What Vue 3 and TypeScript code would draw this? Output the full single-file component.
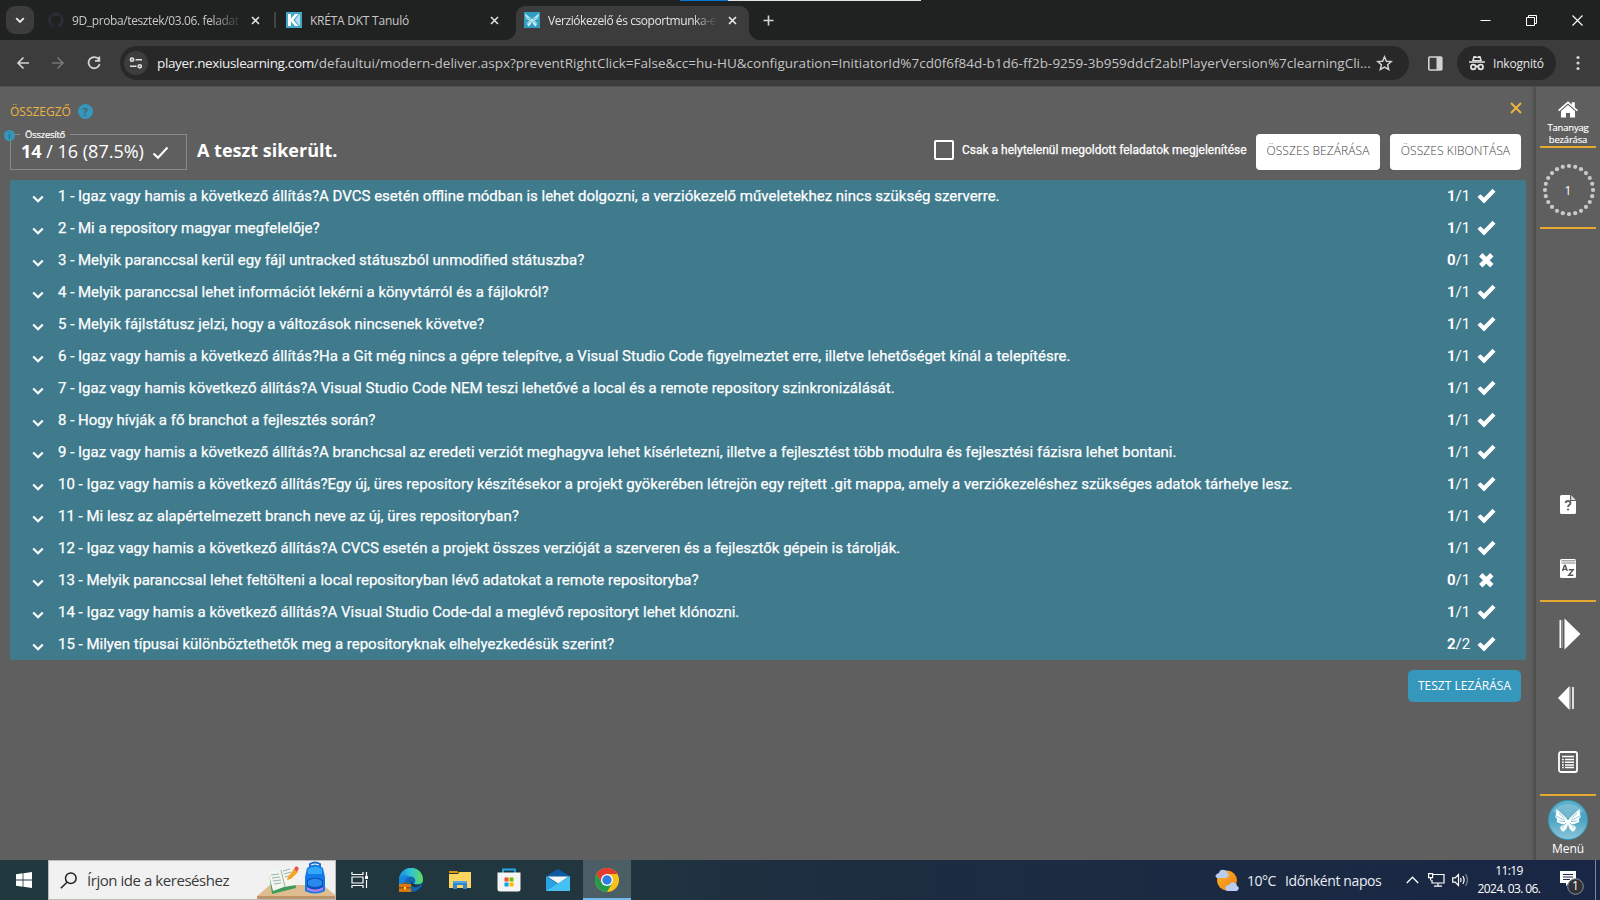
<script setup lang="ts">
interface Question {
  text: string
  score: number
  max: number
}

const questions: Question[] = [
  { text: 'Igaz vagy hamis a következő állítás?A DVCS esetén offline módban is lehet dolgozni, a verziókezelő műveletekhez nincs szükség szerverre.', score: 1, max: 1 },
  { text: 'Mi a repository magyar megfelelője?', score: 1, max: 1 },
  { text: 'Melyik paranccsal kerül egy fájl untracked státuszból unmodified státuszba?', score: 0, max: 1 },
  { text: 'Melyik paranccsal lehet információt lekérni a könyvtárról és a fájlokról?', score: 1, max: 1 },
  { text: 'Melyik fájlstátusz jelzi, hogy a változások nincsenek követve?', score: 1, max: 1 },
  { text: 'Igaz vagy hamis a következő állítás?Ha a Git még nincs a gépre telepítve, a Visual Studio Code figyelmeztet erre, illetve lehetőséget kínál a telepítésre.', score: 1, max: 1 },
  { text: 'Igaz vagy hamis következő állítás?A Visual Studio Code NEM teszi lehetővé a local és a remote repository szinkronizálását.', score: 1, max: 1 },
  { text: 'Hogy hívják a fő branchot a fejlesztés során?', score: 1, max: 1 },
  { text: 'Igaz vagy hamis a következő állítás?A branchcsal az eredeti verziót meghagyva lehet kísérletezni, illetve a fejlesztést több modulra és fejlesztési fázisra lehet bontani.', score: 1, max: 1 },
  { text: 'Igaz vagy hamis a következő állítás?Egy új, üres repository készítésekor a projekt gyökerében létrejön egy rejtett .git mappa, amely a verziókezeléshez szükséges adatok tárhelye lesz.', score: 1, max: 1 },
  { text: 'Mi lesz az alapértelmezett branch neve az új, üres repositoryban?', score: 1, max: 1 },
  { text: 'Igaz vagy hamis a következő állítás?A CVCS esetén a projekt összes verzióját a szerveren és a fejlesztők gépein is tárolják.', score: 1, max: 1 },
  { text: 'Melyik paranccsal lehet feltölteni a local repositoryban lévő adatokat a remote repositoryba?', score: 0, max: 1 },
  { text: 'Igaz vagy hamis a következő állítás?A Visual Studio Code-dal a meglévő repositoryt lehet klónozni.', score: 1, max: 1 },
  { text: 'Milyen típusai különböztethetők meg a repositoryknak elhelyezkedésük szerint?', score: 2, max: 2 },
]

const dots = Array.from({ length: 24 }, (_, i) => {
  const a = (i * Math.PI) / 12
  return { x: 26 + 24 * Math.cos(a), y: 26 + 24 * Math.sin(a) }
})
</script>

<template>
  <div class="screen">
    <header class="tabs">
      <div class="progress"><i></i></div>
      <div class="chev-btn">
        <svg width="10" height="7" viewBox="0 0 10 7"><path d="M1.2 1.2 5 5l3.800-3.800" fill="none" stroke="#e8e8e8" stroke-width="1.900" /></svg>
      </div>
      <div class="tab t1">
        <svg width="16" height="16" viewBox="0 0 16 16"><path fill="#292e37" d="M8 .3a8 8 0 0 0-2.500 15.500c.4.100.500-.2.500-.4v-1.500c-2.200.5-2.700-.9-2.700-.9-.4-.9-.9-1.200-.9-1.200-.7-.5.1-.5.1-.5.800.1 1.200.8 1.200.8.700 1.300 1.900.9 2.300.7.1-.5.300-.9.500-1.100-1.800-.2-3.600-.9-3.600-4 0-.9.300-1.600.8-2.100-.1-.2-.4-1 .1-2.100 0 0 .7-.2 2.200.8a7.500 7.500 0 0 1 4 0c1.500-1 2.200-.8 2.200-.8.400 1.100.2 1.900.1 2.100.5.600.8 1.300.8 2.100 0 3.100-1.900 3.700-3.700 3.900.3.300.6.800.6 1.500v2.300c0 .2.100.5.500.4A8 8 0 0 0 8 .3z" /></svg>
        <span class="ttl">9D_proba/tesztek/03.06. feladat</span>
        <svg class="x" width="9" height="9" viewBox="0 0 9 9"><path d="m1 1 7 7M8 1 1 8" stroke="#dedede" stroke-width="1.600" /></svg>
      </div>
      <i class="sep"></i>
      <div class="tab t2">
        <svg width="16" height="16" viewBox="0 0 16 16"><path fill="#43a7c9" d="M0 0h16v16H0z" /><path fill="#fff" d="M2 2h3v4.500L9 2h3.500L7.300 8l5.200 6H9L5 9.500V14H2z" /><path fill="#b7e0ec" d="m12 4 2-2v12l-2-2-3-4z" /></svg>
        <span class="ttl">KRÉTA DKT Tanuló</span>
        <svg class="x" width="9" height="9" viewBox="0 0 9 9"><path d="m1 1 7 7M8 1 1 8" stroke="#dedede" stroke-width="1.600" /></svg>
      </div>
      <div class="tab t3">
        <svg width="16" height="16" viewBox="0 0 16 16"><path fill="#2f9cc0" d="M0 0h16v16H0z" /><path fill="#c9edf5" d="M1 1.500 7 6l1 1.500L9 6l6-4.500-1 5-3.500 2 3 3-2 3L9 12 8 9l-1 3-2.500 2.500-2-3 3-3L2 6.500z" /><path stroke="#2f9cc0" stroke-width=".6" d="m3 2 4 5m6-5L9 7M2 5l5 3m7-3L9 8m-6 4 4-3m6 3L9 9" /></svg>
        <span class="ttl">Verziókezelő és csoportmunka-e</span>
        <svg class="x" width="9" height="9" viewBox="0 0 9 9"><path d="m1 1 7 7M8 1 1 8" stroke="#ececec" stroke-width="1.600" /></svg>
      </div>
      <svg class="plus" width="11" height="11" viewBox="0 0 11 11"><path d="M5.500.5v10M.5 5.500h10" stroke="#d5d5d5" stroke-width="1.600" /></svg>
      <div class="winbtns">
        <svg width="11" height="11" viewBox="0 0 11 11"><path d="M.5 5.500h10" stroke="#fff" /></svg>
        <svg width="11" height="11" viewBox="0 0 11 11"><path d="M.5 2.500h8v8h-8zM2.500 2.500v-2h8v8h-2" fill="none" stroke="#fff" /></svg>
        <svg width="11" height="11" viewBox="0 0 11 11"><path d="m.5.5 10 10m0-10-10 10" stroke="#fff" stroke-width="1.100" /></svg>
      </div>
    </header>

    <div class="toolbar">
      <svg class="nav" width="16" height="16" viewBox="0 0 16 16"><path d="M14 8H3m5.500-5.500L3 8l5.500 5.500" fill="none" stroke="#d2d2d2" stroke-width="1.700" /></svg>
      <svg class="nav" width="16" height="16" viewBox="0 0 16 16"><path d="M2 8h11M7.500 2.500 13 8l-5.500 5.500" fill="none" stroke="#757575" stroke-width="1.700" /></svg>
      <svg class="nav" width="16" height="16" viewBox="0 0 16 16"><path d="M12.800 4.500A5.600 5.600 0 1 0 13.600 9M13.300 1.500v4.300H9" fill="none" stroke="#d2d2d2" stroke-width="1.800" /></svg>
      <div class="omni">
        <div class="tune"><svg width="14" height="12" viewBox="0 0 14 12"><g fill="none" stroke="#e0e0e0" stroke-width="1.600"><circle cx="3" cy="2.700" r="1.600" /><path d="M6.500 2.700H13M1 9.300h6.500" /><circle cx="10.800" cy="9.300" r="1.600" /></g></svg></div>
        <div class="url"><b>player.nexiuslearning.com</b>/defaultui/modern-deliver.aspx?preventRightClick=False&amp;cc=hu-HU&amp;configuration=InitiatorId%7cd0f6f84d-b1d6-ff2b-9259-3b959ddcf2ab!PlayerVersion%7clearningCli...</div>
        <svg class="star" width="17" height="16" viewBox="0 0 17 16"><path d="m8.500 1.800 1.900 4.400 4.800.4-3.600 3.200 1.100 4.700-4.200-2.500-4.200 2.500 1.100-4.700-3.600-3.200 4.800-.4z" fill="none" stroke="#d2d2d2" stroke-width="1.500" /></svg>
      </div>
      <svg class="side-ic" width="15" height="15" viewBox="0 0 15 15"><rect x=".8" y="1" width="13" height="13" rx="1" fill="none" stroke="#d2d2d2" stroke-width="1.600" /><path d="M8.500 1h5.500v13H8.500z" fill="#d2d2d2" /></svg>
      <div class="incog">
        <svg width="16" height="16" viewBox="0 0 16 16"><path fill="#e3e3e3" d="M4.500 1h2L8 2l1.500-1h2l1.500 5H3zM0 6.200h16v1.600H0z" /><path fill="#282828" d="M5.500 3h5l.5 2H5z" /><g fill="none" stroke="#e3e3e3" stroke-width="1.800"><circle cx="4.300" cy="12" r="2.300" /><circle cx="11.700" cy="12" r="2.300" /><path d="M6.500 11.700q1.500-1 3 0" /></g></svg>
        <span>Inkognitó</span>
      </div>
      <svg class="menu-ic" width="4" height="16" viewBox="0 0 4 16"><g fill="#d2d2d2"><circle cx="2" cy="2.500" r="1.600" /><circle cx="2" cy="8" r="1.600" /><circle cx="2" cy="13.500" r="1.600" /></g></svg>
    </div>

    <div class="page">
      <main>
        <div class="title-row">
          <span class="title">ÖSSZEGZŐ</span>
          <span class="help">?</span>
          <svg class="close" width="12" height="12" viewBox="0 0 12 12"><path d="m1 1 10 10M11 1 1 11" stroke="#eeb33f" stroke-width="2" /></svg>
        </div>
        <div class="sum-row">
          <div class="sumbox">
            <span class="info">i</span>
            <span class="legend">Összesítő</span>
            <span class="pts"><b>14</b> / 16 (87.5%)</span>
            <svg width="17" height="14" viewBox="0 0 17 14"><path d="m1.500 7.500 4.500 4.300L15.500 1.500" fill="none" stroke="#fff" stroke-width="2" /></svg>
          </div>
          <h1>A teszt sikerült.</h1>
          <i class="check"></i>
          <label>Csak a helytelenül megoldott feladatok megjelenítése</label>
          <button class="btn b1"><span>ÖSSZES BEZÁRÁSA</span></button>
          <button class="btn b2"><span>ÖSSZES KIBONTÁSA</span></button>
        </div>
        <ul class="list">
          <li v-for="(q, i) in questions" :key="i">
            <svg class="arrow" width="12" height="9" viewBox="0 0 12 9"><path d="M1.200 1.500 6 6.300l4.800-4.800" fill="none" stroke="#fff" stroke-width="2.200" /></svg>
            <span class="q">{{ i + 1 }} - {{ q.text }}</span>
            <span class="score"><b>{{ q.score }}</b>/{{ q.max }}</span>
            <svg v-if="q.score" class="mark" width="19" height="16" viewBox="0 0 19 16"><path fill="#fff" d="M.5 9 3.300 6.200 7 9.500 15.500.8l3 3L7 15.500z" /></svg>
            <svg v-else class="mark" width="19" height="16" viewBox="0 0 19 16"><path d="m3.800 2.800 11 11m0-11-11 11" stroke="#fff" stroke-width="4.800" /></svg>
          </li>
        </ul>
        <button class="finish"><span>TESZT LEZÁRÁSA</span></button>
      </main>

      <aside>
        <svg class="home" width="20" height="17" viewBox="0 0 20 17"><path fill="#fff" d="M10 .3 13.800 3.700V1.200h3v5.300L20 9l-1.200 1.300L10 2.600l-8.800 7.700L0 9z" /><path fill="#fff" d="m10 4 7 6v6.500h-5V12H8v4.500H3V10z" /></svg>
        <div class="lesson">Tananyag<br />bezárása</div>
        <hr />
        <div class="ring">
          <svg width="52" height="52" viewBox="0 0 52 52"><circle v-for="(d, i) in dots" :key="i" :cx="d.x" :cy="d.y" r="2.100" fill="#c9c9c9" /></svg>
          <span>1</span>
        </div>
        <hr />
        <div class="ic help-doc">
          <svg width="16" height="19" viewBox="0 0 16 19"><path fill="#fff" d="M1.500 0H10v6h6v11.500a1.500 1.500 0 0 1-1.500 1.500h-13A1.500 1.500 0 0 1 0 17.500v-16A1.500 1.500 0 0 1 1.500 0z" /><path fill="#fff" d="M11.200.3 15.700 5h-4.500z" opacity=".8" /><path d="M5.500 8q.3-2 2.500-2t2.500 2q0 1-1.300 2T8 12" fill="none" stroke="#5f5f5f" stroke-width="1.800" /><circle cx="8" cy="14.500" r="1.100" fill="#5f5f5f" /></svg>
        </div>
        <div class="ic dict">
          <svg width="16" height="19" viewBox="0 0 16 19"><rect width="16" height="19" rx="1.500" fill="#fff" /><path d="M1.500 1.800h14M1.500 4h14" stroke="#5f5f5f" stroke-width=".8" /><path d="m2.500 12 2-5.500h.8l2 5.500M3.300 10.400h3.200M8.800 10.800h4.400l-4.500 5.400h4.600" fill="none" stroke="#555" stroke-width="1.400" /></svg>
        </div>
        <hr />
        <div class="ic next">
          <svg width="22" height="32" viewBox="0 0 22 32"><path fill="#fff" d="M.5 2h1.600v28H.5zM5.500.5 21.500 16 5.500 31.500z" /><path d="M3.100 2v28" stroke="#aaa" /></svg>
        </div>
        <div class="ic prev">
          <svg width="16" height="24" viewBox="0 0 16 24"><path fill="#fff" d="M11.500 0v24L0 12z" /><path d="M12.500 1v22" stroke="#aaa" stroke-width=".8" /><path d="M15 1v22" stroke="#fff" stroke-width="1.600" /></svg>
        </div>
        <div class="ic toc">
          <svg width="20" height="22" viewBox="0 0 20 22"><rect x="1" y="1" width="18" height="20" rx="2" fill="none" stroke="#fff" stroke-width="1.800" /><path d="M4 5.500h12M7 8.500h9M7 11.200h9M7 13.900h9M7 16.600h9M4 8.500h1.800M4 11.200h1.800M4 13.900h1.800M4 16.600h1.800" stroke="#fff" stroke-width="1.500" /></svg>
        </div>
        <hr />
        <svg class="fly" width="40" height="40" viewBox="0 0 40 40">
          <defs><linearGradient id="fg" x1="0" y1="0" x2="0" y2="1"><stop offset="0" stop-color="#5fb0cb" /><stop offset=".45" stop-color="#4aa3c2" /><stop offset="1" stop-color="#8cc6da" /></linearGradient></defs>
          <circle cx="20" cy="20" r="19.500" fill="url(#fg)" stroke="#3896b8" />
          <path d="M5 10Q20-2 35 10q-3 8-15 8T5 10z" fill="#fff" opacity=".2" />
          <path fill="#fff" d="M8.500 9 14 14l4 3.500 2 3 2-3 4-3.500L31.500 9l.3 4.500 1 3.500-2 2 .5 3-5 2-3 .3 4 2.200.7 2-1 .5-.5 2-2.500.5-2.500-3-1.500-4-1.500 4-2.500 3-2.500-.5-.5-2-1-.5.7-2 4-2.200-3-.3-5-2 .5-3-2-2 1-3.500z" />
          <path d="m13 9 4.500 8M27 9l-4.500 8M8 16l9 4.500M32 16l-9 4.500m-9 7.500 4-5m8 5-4-5m-11-2 6 .5m12-.5-6 .5M11 13l5 5m13-5-5 5" stroke="#65afc9" stroke-width=".7" />
        </svg>
        <div class="menu-lbl">Menü</div>
      </aside>
    </div>

    <footer>
      <div class="start"><svg width="16" height="16" viewBox="0 0 16 16"><path fill="#fff" d="M0 2.200 6.600 1.300v6.300H0zM7.400 1.200 16 0v7.600H7.400zM0 8.400h6.600v6.300L0 13.800zM7.400 8.400H16V16l-8.600-1.200z" /></svg></div>
      <div class="search">
        <svg class="lens" width="18" height="17" viewBox="0 0 18 17"><g fill="none" stroke="#222" stroke-width="1.500"><circle cx="10.800" cy="6.300" r="5.300" /><path d="M7 10.300.8 16.300" /></g></svg>
        <span>Írjon ide a kereséshez</span>
        <svg class="art" width="78" height="38" viewBox="0 0 78 38">
          <path fill="#dfbd91" d="M13 24h53l12 10v4H0v-3z" /><path fill="#bd9468" d="M0 35h78v3H0z" />
          <path fill="#3f9b59" d="m12 12 23-5 4 20-24 6z" /><path fill="#f3f5ef" d="m11 10 13-1 11-4 4 19-12 2-11 4z" />
          <path d="m24 9 4 17M14 14l8-1m-7 4 8-1m-7 4 8-1m-7 4 7-1m2-12 7-2m-6 5 7-2m-6 5 7-2" stroke="#8bada1" stroke-width=".9" fill="none" />
          <path fill="#f5a426" d="m31 16 6-8 4 3-7 7-4 1z" /><path fill="#ed5147" d="m37 8 2-3 3 2-2 4z" />
          <path d="M53 6V3q5-3 10 0v3" fill="none" stroke="#176bc8" stroke-width="2" />
          <path fill="#117ce8" d="M50 7q8-7 16 0l2 9v14q-10 5-20 0V16z" /><path fill="#34a7fa" d="M51 8q7-5 14 0v5H51z" />
          <path fill="#0b4fbc" d="M50 19q8-5 16 0v10q-8 4-16 0z" /><path d="M50 26q8 5 16 0v3q-8 4-16 0z" fill="#aa83f4" /><path d="M51 20q7-5 14 0v4q-7 4-14 0z" fill="#2b88ed" />
        </svg>
      </div>
      <div class="app tv"><svg width="18" height="16" viewBox="0 0 18 16"><g fill="none" stroke="#fff" stroke-width="1.200"><path d="M1 0v2.500h11V0M1 16v-2.500h11V16M1 5h11v6H1zM15.500 0v4M15.500 8v8" /></g><path fill="#fff" d="M14 4h3v3h-3z" /></svg></div>
      <div class="app"><svg width="24" height="24" viewBox="0 0 24 24">
        <defs><linearGradient id="e1"><stop stop-color="#168fe0" /><stop offset=".5" stop-color="#35c3d7" /><stop offset="1" stop-color="#63dc55" /></linearGradient></defs>
        <circle cx="12" cy="12" r="12" fill="#1267b4" /><path fill="url(#e1)" d="M0 12a12 12 0 0 1 24-.5c.3 4.500-6 6.500-9 4 3-3 .5-7-4-7-5 0-8 3-11 7z" /><path fill="#1485dc" d="M0 12c1-5 7-6 11-3-5 1-6 5-4 9H0z" /><path fill="#1d3840" d="M12 13q1 5 11 3-4 4-8 3t-3-6z" />
        <path fill="#d8790b" d="M0 16h12v8H0z" /><path fill="#9d4c05" d="M0 19h12v1.500H0zM4 14.500h4V16H4z" /><path fill="#ffd35b" d="M5 19h2v2.500H5z" /></svg></div>
      <div class="app"><svg width="22" height="20" viewBox="0 0 22 20"><path fill="#e19a05" d="M0 1h8l2 2H0z" /><path fill="#ffd562" d="M0 4h9l1.500-2H22v16H0z" /><path fill="#2f88cf" d="M4 19v-8h14v8h-4v-4H8v4z" /><path fill="#51a9e8" d="M4 11h14v2H4z" /></svg></div>
      <div class="app"><svg width="24" height="24" viewBox="0 0 24 24"><path d="M6 6V1.500h12V6" fill="none" stroke="#27a9ec" stroke-width="1.800" /><path fill="#f5f5f5" d="M.5 4.500h23V21q0 2.500-2.500 2.500H3Q.5 23.500.5 21z" /><path fill="#f25022" d="M7.500 9.500h4v4h-4z" /><path fill="#7fba00" d="M12.500 9.500h4v4h-4z" /><path fill="#00a4ef" d="M7.500 14.500h4v4h-4z" /><path fill="#ffb900" d="M12.500 14.500h4v4h-4z" /></svg></div>
      <div class="app"><svg width="24" height="22" viewBox="0 0 24 22"><path fill="#0c59a4" d="M0 7 12 0l12 7v4H0z" /><path fill="#27a3e2" d="m0 7 12 8 12-8v15H0z" /><path fill="#45c2f3" d="m0 22 14-9L24 7v15z" /><path fill="#f4f5f6" d="m1.500 7.500 10.500 7 10.500-7z" /></svg></div>
      <div class="app active"><svg width="24" height="24" viewBox="0 0 24 24"><circle cx="12" cy="12" r="12" fill="#fbc116" /><path fill="#e33b2e" d="M1.600 6A12 12 0 0 1 22.400 6H12l-5.200 9z" /><path fill="#249a4b" d="M1.600 6A12 12 0 0 0 12 24l5.200-9H6.800z" /><circle cx="12" cy="12" r="6" fill="#fff" /><circle cx="12" cy="12" r="4.700" fill="#2f7de9" /></svg></div>

      <div class="weather">
        <svg width="24" height="22" viewBox="0 0 24 22"><defs><linearGradient id="sun" x1="0" y1="0" x2="1" y2="1"><stop stop-color="#fdb92a" /><stop offset="1" stop-color="#ef7911" /></linearGradient></defs><circle cx="12" cy="11.500" r="10" fill="url(#sun)" /><path fill="#b8cdf0" d="M2 9q-3-2 0-4 1-1 2-1 1-4 5-3 3 0 3 3 3 1 1 4-1 1-3 1zM12 22q-3-2-1-5 1-1 3-1 2-4 6-2 2 1 2 3 3 1 1 4l-1 1z" /></svg>
        <span class="deg">10°C</span><span class="wtxt">Időnként napos</span>
      </div>
      <svg class="up" width="13" height="8" viewBox="0 0 13 8"><path d="m.8 7 5.700-5.800L12.200 7" fill="none" stroke="#fff" stroke-width="1.300" /></svg>
      <svg class="net" width="17" height="14" viewBox="0 0 17 14"><path d="M5 1.500h11v8.500H4V7M10 10v3M6 13.200h8M.6.6h4v4h-4zM2.600 4.600v3" fill="none" stroke="#fff" stroke-width="1.200" /></svg>
      <svg class="vol" width="17" height="14" viewBox="0 0 17 14"><g fill="none" stroke="#fff" stroke-width="1.200"><path d="M.7 4.800h2.500L6.500 1.500v11L3.200 9.200H.7zM8.500 5q1.300 2 0 4M10.800 3.200q2.600 3.800 0 7.600" /><path d="M13.500 1.200q4 5.800 0 11.600" stroke="#7b8597" /></g></svg>
      <div class="clock"><span>11:19</span><span class="date">2024. 03. 06.</span></div>
      <div class="notif">
        <svg width="25" height="25" viewBox="0 0 25 25"><path fill="#fff" d="M0 1h16v12H9l-3 3v-3H0z" /><path d="M3 4.500h10M3 7h10M3 9.500h7" stroke="#1b2945" stroke-width="1.100" /><circle cx="15.500" cy="16.500" r="7.800" fill="#303236" stroke="#8d9199" /></svg>
        <span>1</span>
      </div>
      <i class="peek"></i>
    </footer>
  </div>
</template>

<style>
body { overflow: hidden; background: #5f5f5f; }
</style>

<style scoped>
* { box-sizing: border-box; }
.screen { width: 1600px; height: 900px; display: flex; flex-direction: column; overflow: hidden; font-family: "Open Sans", "Noto Sans", sans-serif; color: #fff; background: #5f5f5f; white-space: nowrap; }
svg { display: block; flex: none; }
b { font-weight: 700; }

.tabs { position: relative; height: 40px; flex: none; background: #202221; display: flex; align-items: flex-start; }
.progress { position: absolute; left: 680px; top: 0; width: 241px; height: 1px; background: #e4e4e4; }
.progress i { display: block; width: 48px; height: 1px; background: #0078d7; }
.chev-btn { width: 28px; height: 28px; margin: 6px 0 0 6px; border-radius: 9px; background: #3c3c3c; display: grid; place-items: center; }
.tab { display: flex; align-items: center; height: 40px; font-size: 12px; color: #c8c8c8; }
.ttl { flex: none; }
.t1 { margin-left: 14px; width: 226px; }
.t1 .ttl { margin-left: 8px; width: 168px; letter-spacing: -0.380px; mask-image: linear-gradient(90deg, #000 140px, transparent 170px); }
.t1 .x { margin-left: 11px; }
.sep { width: 2px; height: 16px; margin-top: 12px; background: #444; }
.t2 { margin-left: 10px; width: 223px; }
.t2 .ttl { margin-left: 8px; width: 171px; letter-spacing: -0.240px; }
.t2 .x { margin-left: 9px; }
.t3 { position: relative; width: 233px; height: 34px; margin: 6px 0 0 7px; background: #3c3c3c; border-radius: 9px 9px 0 0; padding: 0 0 6px 8px; color: #e4e4e4; }
.t3::before, .t3::after { content: ""; position: absolute; bottom: 0; width: 10px; height: 10px; }
.t3::before { left: -10px; background: radial-gradient(circle at 0 0, #202221 9.500px, #3c3c3c 10px); }
.t3::after { right: -10px; background: radial-gradient(circle at 100% 0, #202221 9.500px, #3c3c3c 10px); }
.t3 .ttl { margin-left: 8px; width: 170px; letter-spacing: -0.430px; mask-image: linear-gradient(90deg, #000 145px, transparent 169px); }
.t3 .x { margin-left: 10px; }
.plus { margin: 15px 0 0 14px; }
.winbtns { margin: 15px 15px 0 auto; display: flex; gap: 35px; padding-right: 2px; }

.toolbar { height: 47px; flex: none; background: #3c3c3c; border-bottom: 1px solid #505050; display: flex; align-items: center; box-shadow: 0 1px 0 #696969; }
.nav { margin-left: 15px; }
.nav + .nav { margin-left: 19px; }
.nav + .nav + .nav { margin-left: 20px; }
.omni { margin-left: 18px; width: 1289px; height: 34px; border-radius: 17px; background: #282828; display: flex; align-items: center; }
.tune { width: 24px; height: 24px; margin-left: 4px; border-radius: 50%; background: #3d3d3d; display: grid; place-items: center; }
.url { margin-left: 9px; width: 1210px; font-size: 13.500px; color: #c4c4c4; letter-spacing: 0.010px; }
.url b { color: #f0f0f0; font-weight: 400; letter-spacing: -0.350px; }
.star { margin-left: 9px; }
.side-ic { margin-left: 19px; }
.incog { margin-left: 14px; width: 99px; height: 34px; border-radius: 17px; background: #282828; display: flex; align-items: center; padding-left: 12px; font-size: 12px; color: #e6e6e6; }
.incog span { margin-left: 8px; letter-spacing: -0.200px; }
.menu-ic { margin-left: 20px; }

.page { flex: 1; display: flex; min-height: 0; }
main { width: 1536px; padding-left: 10px; display: flex; flex-direction: column; background: linear-gradient(90deg, #5f5f5f 1531px, #4b4b4b 1536px); }
.title-row { display: flex; height: 47px; padding-top: 13px; }
.title { font-size: 12px; line-height: 23px; color: #eeb33f; }
.help { width: 15px; height: 15px; margin: 4px 0 0 7px; border-radius: 50%; background: #3597bb; color: #50606a; font-weight: 700; font-size: 11px; line-height: 15px; text-align: center; }
.close { margin: 2px 14px 0 auto; }
.sum-row { display: flex; height: 46px; }
.sumbox { position: relative; width: 177px; height: 36px; border: 1px solid #8a8a8a; display: flex; align-items: center; }
.info { position: absolute; left: -7px; top: -5px; width: 11px; height: 11px; border-radius: 50%; background: #3597bb; color: #35515d; font-size: 9px; line-height: 11px; text-align: center; }
.legend { position: absolute; left: 9px; top: -8px; padding: 0 5px; background: #5f5f5f; font-size: 9.500px; line-height: 15px; letter-spacing: -0.250px; -webkit-text-stroke: 0.200px #fff; }
.pts { margin-left: 10px; margin-top: -2px; font-size: 18px; line-height: 34px; }
.sumbox svg { margin: 2px 0 0 8px; }
h1 { margin: 2px 0 0 10px; font-size: 18px; line-height: 28px; font-weight: 700; }
.check { width: 20px; height: 20px; margin: 6px 0 0 auto; border: 2px solid #fff; border-radius: 2px; }
label { margin-left: 8px; width: 286px; font: 400 12px/32px Roboto, sans-serif; -webkit-text-stroke: 0.250px #fff; }
.btn { height: 36px; margin: 0 0 0 10px; padding: 0; border: 0; border-radius: 4px; background: #fff; color: #444; font: 300 12px/34px "Open Sans", sans-serif; letter-spacing: 0.080px; }
.b1 { width: 124px; margin-left: 8px; }
.b2 { width: 131px; margin-right: 15px; }
.btn span, .finish span { display: block; margin-top: -2px; }
.list { list-style: none; margin: 0; padding: 0; width: 1516px; background: #407b8d; }
li { height: 32px; display: flex; align-items: center; padding-left: 22px; font: 400 15px/32px Roboto, sans-serif; }
.arrow { margin-top: 6px; }
.q { margin-left: 14px; flex: 1; -webkit-text-stroke: 0.250px #fff; }
.score { width: 24px; }
.mark { margin: 0 30px 0 6px; }
.finish { align-self: flex-end; margin: 10px 15px 0 0; width: 113px; height: 32px; padding: 0; border: 0; border-radius: 5px; background: #3597bb; color: #fff; font: 400 12px/31px "Open Sans", sans-serif; }

aside { width: 64px; display: flex; flex-direction: column; align-items: center; background: #5f5f5f; }
hr { width: 56px; height: 2px; margin: 0; border: 0; background: #e6a932; flex: none; }
.home { margin-top: 14px; }
.lesson { height: 28px; padding-top: 4px; font-size: 9.500px; line-height: 12px; letter-spacing: -0.200px; text-align: center; -webkit-text-stroke: 0.150px #fff; }
.ring { position: relative; width: 52px; height: 79px; padding-top: 16px; margin-left: 2px; }
.ring span { position: absolute; left: 0; width: 50px; top: 34px; font-size: 12px; line-height: 18px; text-align: center; }
.ic { display: grid; place-items: center; flex: none; }
.help-doc { height: 64px; margin-top: 243px; }
.dict { height: 64px; }
.next { height: 64px; margin-left: 3px; }
.prev { height: 64px; margin-left: -4px; }
.toc { height: 64px; }
.fly { margin-top: 4px; }
.menu-lbl { font-size: 12px; line-height: 17px; }

footer { height: 40px; flex: none; display: flex; align-items: center; background: linear-gradient(90deg, #21383f 0, #21363f 600px, #1e2f40 760px, #1b2a42 1200px, #192645 1600px); }
.start { width: 48px; display: grid; place-items: center; }
.search { width: 288px; height: 40px; background: #f1f1f1; border: 1px solid #bababa; display: flex; align-items: center; color: #3a3a3a; font-size: 15px; }
.lens { margin-left: 11px; }
.search span { margin-left: 9px; width: 155px; letter-spacing: -0.450px; }
.art { margin-left: 15px; }
.app { width: 49px; height: 40px; display: grid; place-items: center; }
.app.tv { width: 48px; margin-right: 2px; }
.active { width: 48px; margin-left: 1px; background: #4b5e66; border-bottom: 2px solid #76b9ed; padding-top: 2px; }
.weather { margin-left: 584px; display: flex; align-items: center; font-size: 14px; color: #e9edf3; }
.deg { margin-left: 8px; width: 38px; letter-spacing: -0.500px; }
.wtxt { width: 97px; letter-spacing: -0.400px; }
.up { margin-left: 24px; }
.net { margin-left: 9px; }
.vol { margin-left: 7px; }
.clock { margin-left: 7px; width: 66px; display: flex; flex-direction: column; align-items: center; font-size: 12px; line-height: 18px; letter-spacing: -0.600px; }
.notif { position: relative; margin: 4px 0 0 18px; }
.notif span { position: absolute; left: 8px; top: 7px; width: 15px; text-align: center; font-size: 12px; line-height: 18px; }
.peek { width: 1px; height: 40px; margin-left: auto; margin-right: 4px; background: #7b8597; }
</style>
